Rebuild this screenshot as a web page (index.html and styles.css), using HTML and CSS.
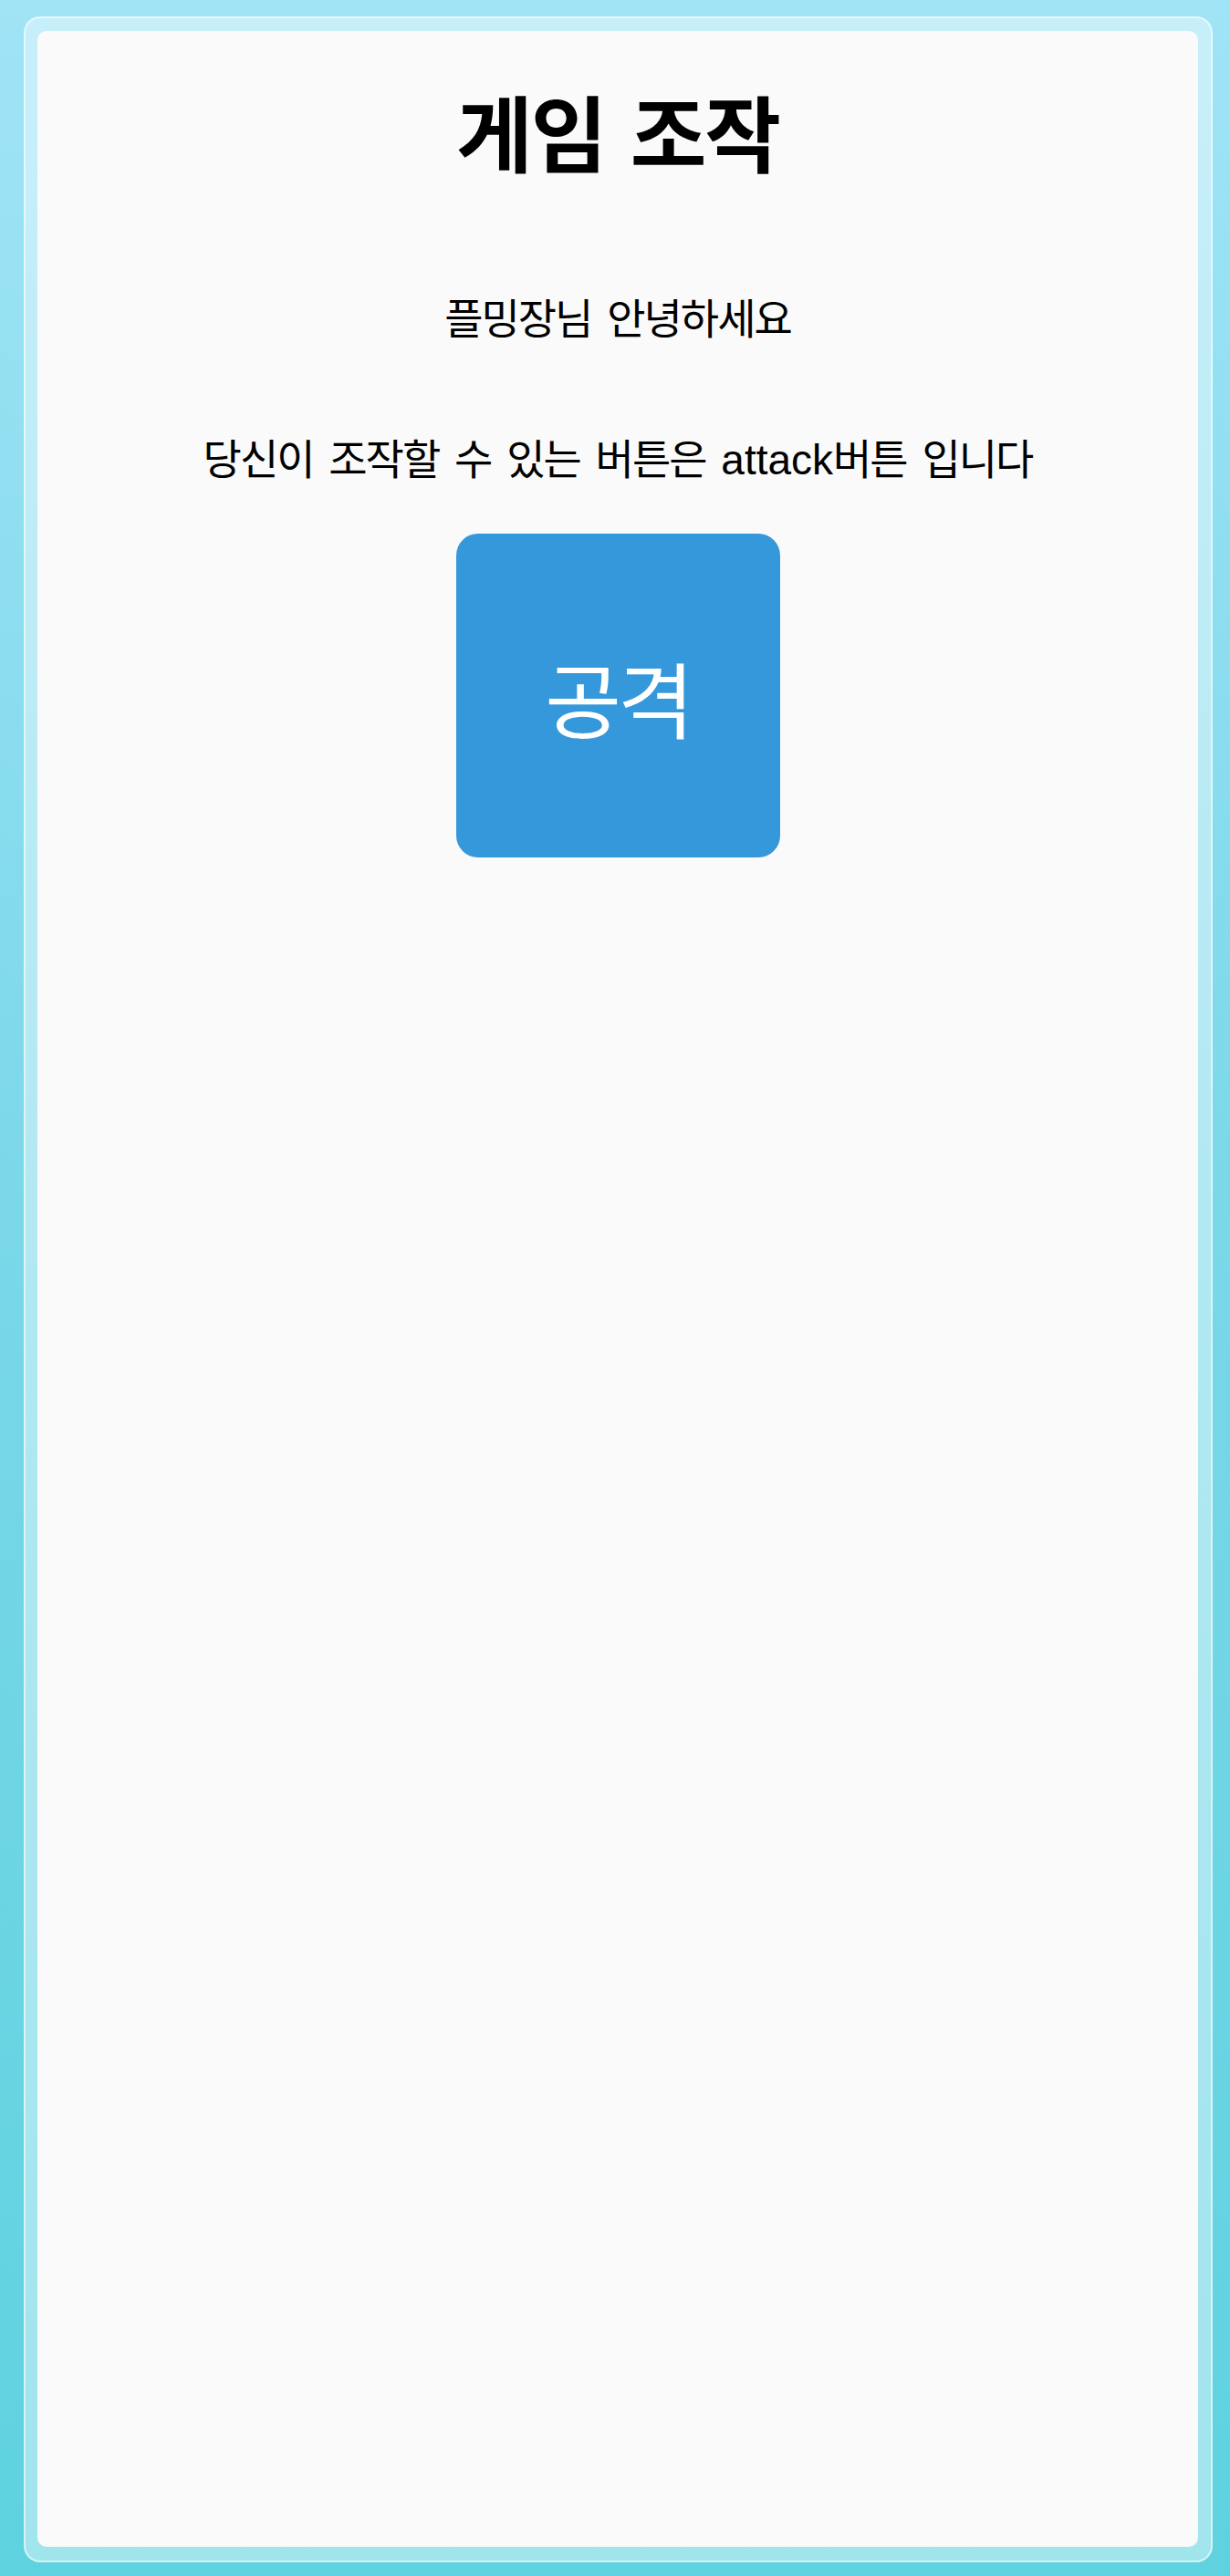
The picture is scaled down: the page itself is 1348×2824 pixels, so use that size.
FILE: index.html
```html
<!DOCTYPE html>
<html lang="ko">
<head>
<meta charset="utf-8">
<title>게임 조작</title>
<link rel="stylesheet" href="styles.css">
</head>
<body>
  <div class="frame">
    <main class="panel">
      <h1 class="title">게임 조작</h1>
      <p class="greeting">플밍장님 안녕하세요</p>
      <p class="info">당신이 조작할 수 있는 버튼은 <span class="latin">attack</span>버튼 입니다</p>
      <button class="attack-btn" type="button">공격</button>
    </main>
  </div>
</body>
</html>
```

FILE: styles.css
```css
html, body {
  margin: 0;
  padding: 0;
}

body {
  width: 1348px;
  height: 2824px;
  box-sizing: border-box;
  padding: 18px 19px 15px 26px;
  background: linear-gradient(to bottom, #a0e4f6 0%, #78d7e8 50%, #5ed2df 100%);
  font-family: "Liberation Sans", "Noto Sans CJK KR", sans-serif;
  color: #000;
}

.frame {
  height: 100%;
  box-sizing: border-box;
  padding: 14px 14px 15px 13px;
  border: 2px solid rgba(255, 255, 255, 0.55);
  border-radius: 18px;
  background: rgba(255, 255, 255, 0.42);
}

.panel {
  height: 100%;
  box-sizing: border-box;
  background: #fafafa;
  border-radius: 10px;
  padding-top: 67px;
  display: flex;
  flex-direction: column;
  align-items: center;
  text-align: center;
}

.title {
  margin: 0;
  font-size: 91px;
  line-height: 100px;
  font-weight: 700;
  letter-spacing: -2px;
  word-spacing: 4px;
}

.greeting {
  margin: 124px 0 0;
  font-size: 46px;
  line-height: 50px;
  letter-spacing: -2px;
  word-spacing: 6px;
}

.info {
  margin: 104px 0 0;
  font-size: 46px;
  line-height: 50px;
  letter-spacing: -2px;
  word-spacing: 6px;
}

.latin {
  font-size: 46px;
  letter-spacing: 0;
}

.attack-btn {
  margin-top: 56px;
  width: 355px;
  height: 355px;
  border: none;
  border-radius: 24px;
  background: #3498db;
  color: #fff;
  font-family: "Liberation Sans", "Noto Sans CJK KR", sans-serif;
  font-size: 91px;
  letter-spacing: -4px;
  padding: 0;
  display: flex;
  align-items: center;
  justify-content: center;
}
```
